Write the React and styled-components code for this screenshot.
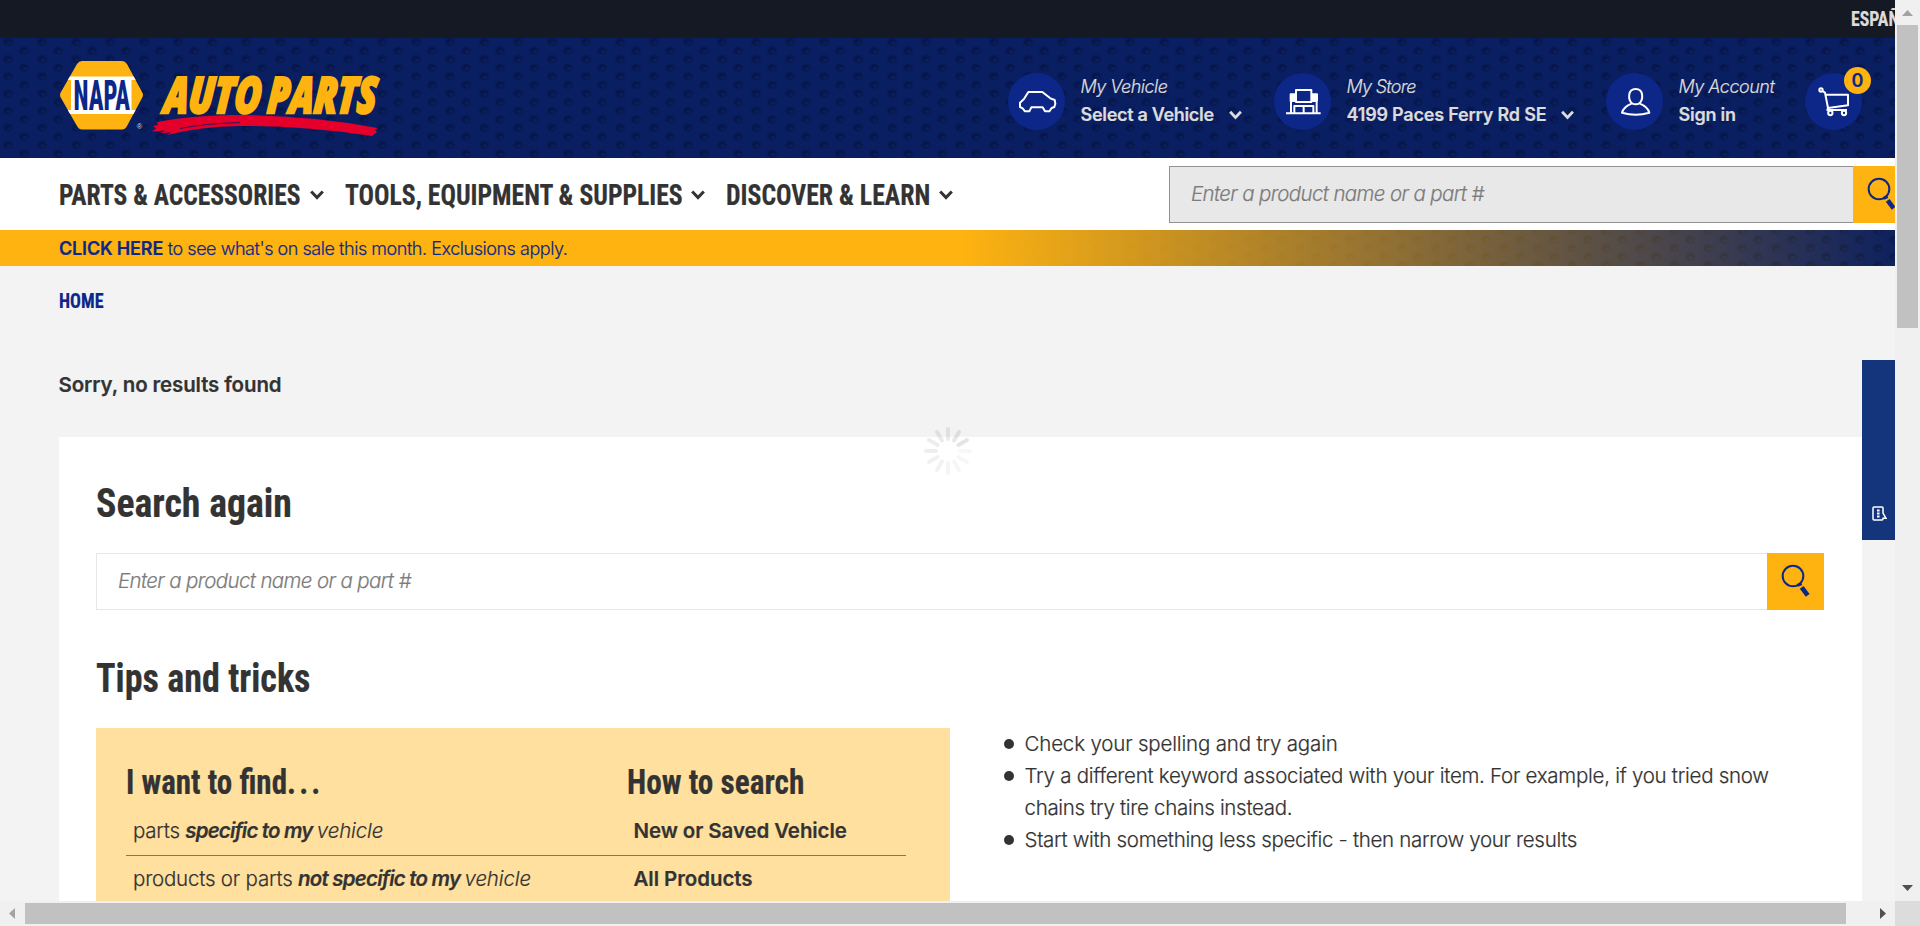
import React from 'react';
import styled, { createGlobalStyle, css } from 'styled-components';

const navy = '#0c2788';
const gold = '#ffb310';
const ink = '#333333';

const GlobalStyle = createGlobalStyle`
  * { box-sizing: border-box; }
  html, body { margin: 0; padding: 0; overflow: hidden; }
  body {
    font-family: Inter, "Liberation Sans", sans-serif;
    font-weight: 300;
    font-size: 20.5px;
    color: ${ink};
    -webkit-text-stroke: 0.2px currentColor;
  }
`;

/* Dimpled metal texture shared by the header and the promo strip */
const dimples = css`
  background-image:
    radial-gradient(ellipse 3px 2px at 9px 10px, rgba(12, 33, 98, 0.8) 50%, transparent 100%),
    radial-gradient(ellipse 6px 5px at 8px 9px, rgba(3, 14, 58, 0.55) 45%, transparent 100%),
    radial-gradient(ellipse 3px 2px at 25px 1.5px, rgba(12, 33, 98, 0.8) 50%, transparent 100%),
    radial-gradient(ellipse 6px 5px at 24px 0.5px, rgba(3, 14, 58, 0.55) 45%, transparent 100%),
    radial-gradient(ellipse 6px 5px at 24px 17.7px, rgba(3, 14, 58, 0.55) 45%, transparent 100%);
  background-size: 34px 17.2px;
  background-position: 0 12px;
`;

const Window = styled.div`
  display: grid;
  grid-template: 901px 25px / 1895px 25px;
  width: 1920px;
  height: 926px;
  overflow: hidden;
`;

const Page = styled.div`
  position: relative;
  overflow: hidden;
  background: #f3f3f3;
`;

const TopBar = styled.div`
  height: 38px;
  padding-left: 1850.5px;
  background: #151923;
  color: #dcdcdc;
  line-height: 39px;
`;

const Header = styled.header`
  display: flex;
  justify-content: space-between;
  height: 120px;
  padding: 0 33px 0 59px;
  background-color: #0a1f61;
  ${dimples}
`;

const Logo = styled.svg`
  width: 324px;
  height: 82px;
  margin-top: 20px;
`;

const Account = styled.div`
  display: grid;
  grid-template-columns: 266px 332px 199px 57px;
  padding-top: 35px;
  color: #dcdcdc;
  font-size: 18px;
  line-height: 28px;
`;

const AccountItem = styled.div`
  position: relative;
  display: flex;
  gap: 15.5px;
`;

const RoundIcon = styled.svg`
  flex: none;
  width: 57px;
  height: 57px;
  border-radius: 50%;
  background: ${navy};
  fill: none;
  stroke: #fff;
  stroke-width: 6;
  stroke-linejoin: round;
`;

const AccountLines = styled.div`
  white-space: nowrap;
`;

const Small = styled.div`
  font-style: italic;
  letter-spacing: ${(p) => p.$track}px;
`;

const Strong = styled.div`
  display: flex;
  align-items: center;
  gap: 15px;
  font-weight: 600;
  letter-spacing: ${(p) => p.$track}px;
`;

const Badge = styled.span`
  position: absolute;
  top: -6px;
  left: 39px;
  width: 27px;
  height: 27px;
  border-radius: 50%;
  background: ${gold};
  color: ${navy};
  font-weight: 600;
  font-size: 18px;
  line-height: 27px;
  text-align: center;
`;

const Chevron = styled.svg`
  flex: none;
  width: ${(p) => p.$w}px;
  height: 10px;
  fill: none;
  stroke: currentColor;
  stroke-width: 3;
`;

const NavBar = styled.nav`
  display: flex;
  justify-content: space-between;
  width: 1910px;
  height: 72px;
  padding: 8px 0 0 59px;
  background: #fff;
`;

const Menu = styled.div`
  display: flex;
  gap: 21px;
  height: 58px;
`;

const MenuItem = styled.div`
  display: flex;
  align-items: center;
  gap: 9px;
`;

/* Narrow display face: the box keeps the final width, the glyphs are squeezed into it */
const Narrow = styled.span`
  display: block;
  width: ${(p) => p.$w}px;
  font-family: "Roboto Condensed", Roboto, sans-serif;
  font-weight: 700;
  font-size: ${(p) => p.$size}px;
  white-space: nowrap;
  transform: scaleX(${(p) => p.$squeeze});
  transform-origin: 0 50%;
  color: ${(p) => p.$color || 'inherit'};
`;

const Dots = styled.span`
  letter-spacing: 3.5px;
`;

const SearchBox = styled.div`
  display: flex;
  width: ${(p) => p.$w}px;
  height: 57px;
`;

const Field = styled.div`
  flex: 1;
  padding-left: 21px;
  border: 1px solid ${(p) => (p.$dark ? '#929292' : '#e6e6e4')};
  border-right: 0;
  background: ${(p) => (p.$dark ? '#e8e8e8' : '#fff')};
  color: #7c7c7c;
  font-style: italic;
  line-height: 54px;
  letter-spacing: -0.63px;
`;

const SearchButton = styled.div`
  width: 57px;
  background: ${gold};
`;

const Glass = styled.svg`
  display: block;
  width: 57px;
  height: 57px;
  fill: none;
  stroke: ${navy};
`;

const Promo = styled.div`
  height: 36px;
  position: relative;
  padding-left: 59px;
  background-color: #0a1f60;
  ${dimples}
  background-position: 0 9px;
  color: ${navy};
  font-size: 18px;
  line-height: 37px;
  &::before {
    content: '';
    position: absolute;
    inset: 0;
    background: linear-gradient(90deg, ${gold} 960px, rgba(255, 179, 16, 0) 1910px);
  }
`;

const PromoText = styled.div`
  position: relative;
  letter-spacing: -0.46px;
`;

const PromoLink = styled.b`
  font-weight: 600;
  letter-spacing: -0.17px;
`;

const Crumbs = styled.div`
  margin: 24px 0 0 59px;
  line-height: 24px;
`;

const NoResults = styled.h2`
  margin: 56px 0 0 58.5px;
  font-weight: 600;
  font-size: 20.5px;
  line-height: 30px;
  letter-spacing: -0.13px;
`;

const Card = styled.section`
  width: 1803px;
  height: 600px;
  margin: 37px 0 0 59px;
  padding: 41px 38px 0 37px;
  background: #fff;
`;

const Heading = styled.h1`
  margin: 0 0 25px;
  line-height: 50px;
`;

const Tips = styled.div`
  display: flex;
  gap: 54px;
`;

const HeadingTips = styled(Heading)`
  margin-top: 43px;
`;

const Panel = styled.div`
  width: 854px;
  height: 300px;
  padding: 35px 44px 0 30px;
  background: #ffe09e;
`;

const PanelHead = styled.div`
  display: grid;
  grid-template-columns: 500.5px 1fr;
  margin-bottom: 5px;
  line-height: 40px;
`;

const PanelRow = styled.div`
  display: grid;
  grid-template-columns: 500.5px 1fr;
  padding-left: 7px;
  line-height: 46px;
  height: ${(p) => p.$h}px;
  border-bottom: 1px solid #777;
  white-space: nowrap;
`;

const Run = styled.span`
  letter-spacing: ${(p) => p.$track}px;
  font-weight: ${(p) => (p.$bold ? 600 : 300)};
  font-style: ${(p) => (p.$italic ? 'italic' : 'normal')};
`;

const List = styled.ul`
  margin: 0;
  padding: 0;
  list-style: none;
  line-height: 32px;
`;

const Item = styled.li`
  display: flex;
  gap: 10.5px;
  white-space: nowrap;
  &::before {
    content: '';
    flex: none;
    width: 10px;
    height: 10px;
    margin-top: 11px;
    border-radius: 50%;
    background: ${ink};
  }
`;

const Line = styled.div`
  letter-spacing: ${(p) => p.$track}px;
`;

const Spinner = styled.svg`
  position: absolute;
  left: 923px;
  top: 426px;
  width: 50px;
  height: 50px;
  stroke: #000;
  stroke-width: 4;
  stroke-linecap: round;
`;

const SideTab = styled.div`
  position: absolute;
  left: 1862px;
  top: 360px;
  width: 40px;
  height: 180px;
  padding: 146px 0 0 10px;
  background: #14347b;
`;

const TabIcon = styled.svg`
  display: block;
  width: 15px;
  height: 15px;
  fill: none;
  stroke: #fff;
  stroke-width: 1.5;
`;

const VBar = styled.div`
  display: flex;
  flex-direction: column;
  align-items: center;
  justify-content: space-between;
  background: #f0f0f0;
`;

const VTop = styled.div`
  display: flex;
  flex-direction: column;
  align-items: center;
`;

const VThumb = styled.div`
  width: 21px;
  height: 303px;
  background: #c1c1c1;
`;

const HBar = styled.div`
  display: flex;
  align-items: center;
  background: #f0f0f0;
`;

const HThumb = styled.div`
  width: 1821px;
  height: 21px;
  margin-right: 24px;
  background: #c1c1c1;
`;

const Arrow = styled.svg`
  display: block;
  width: 25px;
  height: 25px;
  fill: ${(p) => (p.$on ? '#505050' : '#a3a3a3')};
`;

const Corner = styled.div`
  background: #dcdcdc;
`;

const Down = ({ w = 14 }) => (
  <Chevron $w={w} viewBox="0 0 14 10"><path d="M1.2 1.5 L7 7.6 L12.8 1.5" /></Chevron>
);

const SearchIcon = () => (
  <SearchButton>
    <Glass viewBox="0 0 171 171">
      <circle cx="78" cy="69" r="31" strokeWidth="6" />
      <path d="M92 97 L104 92" strokeWidth="9" />
      <path d="M104 103 L122 127" strokeWidth="14" />
    </Glass>
  </SearchButton>
);

const Search = ({ width, dark }) => (
  <SearchBox $w={width}>
    <Field $dark={dark}>Enter a product name or a part #</Field>
    <SearchIcon />
  </SearchBox>
);

const NapaLogo = () => (
  <Logo viewBox="59 58 324 82">
    <defs>
      <clipPath id="hex">
        <path d="M82 61 H122 Q125 61 127 64 L142 92 Q144 95 142 98 L127 126 Q125 129.500 122 129.500 H82 Q79 129.500 77 126 L61 98 Q59 95 61 92 L77 64 Q79 61 82 61 Z" />
      </clipPath>
    </defs>
    <g clipPath="url(#hex)">
      <rect x="59" y="60" width="86" height="71" fill={gold} />
      <path d="M59 76.500 H145 V80 H131.500 V110 H145 V114 H59 V110 H71 V80 H59 Z" fill="#fff" />
    </g>
    <text x="73.500" y="110.300" fontFamily="Roboto Condensed" fontWeight="800" fontSize="43" fill={navy} textLength="56.500" lengthAdjust="spacingAndGlyphs">NAPA</text>
    <text x="136.800" y="128.500" fontFamily="Liberation Sans" fontSize="7.500" fill="#dcdcdc">®</text>
    <g fontFamily="Open Sans" fontWeight="800" fontStyle="italic" fontSize="50" fill={gold} stroke={gold} strokeWidth="2.600" transform="translate(0 113) skewX(-5)">
      <text x="163" y="0" textLength="97" lengthAdjust="spacingAndGlyphs">AUTO</text>
      <text x="266.500" y="0" textLength="109" lengthAdjust="spacingAndGlyphs">PARTS</text>
    </g>
    <path fill="#e4002b" d="M157 122 Q190 115.500 232 115 Q310 115 377.500 128 L375 130 L377 132 L372 136 Q300 125 240 126 Q200 126.500 167 135 L171 132.500 L160 133 L165 130.500 L152 131.500 L156 128.500 L153 126 L158 125 Z" />
    <path stroke="#091d5e" strokeWidth="0.800" fill="none" d="M180 128.500 Q205 123.500 240 122.500" />
  </Logo>
);

const bars = [0.03, 0.035, 0.035, 0.04, 0.05, 0.055, 0.065, 0.07, 0.08, 0.08, 0.09, 0.1];

export default function App() {
  return (
    <>
      <GlobalStyle />
      <Window>
        <Page>
          <TopBar><Narrow $w={66} $size={19.5} $squeeze={0.91}>ESPAÑOL</Narrow></TopBar>
          <Header>
            <NapaLogo />
            <Account>
              <AccountItem>
                <RoundIcon viewBox="0 0 171 171">
                  <path d="M61 57 H103 L127 76 L140 81 L142 92 L139 102 L131 105 L124 115 H111 L104 103 H70 L64 115 H51 L44 106 L36 102 V89 L48 78 Z" />
                </RoundIcon>
                <AccountLines>
                  <Small $track={-0.51}>My Vehicle</Small>
                  <Strong $track={-0.31}>Select a Vehicle <Down w={13} /></Strong>
                </AccountLines>
              </AccountItem>
              <AccountItem>
                <RoundIcon viewBox="0 0 171 171">
                  <path d="M66 51 H112 V87 H66 Z M36 121 H140 M51 87 V121 M128 87 V121 M61 121 V99 H118 V121 M89 99 V121" />
                  <path d="M50 64 H63 V84 H50 Z M115 64 H129 V84 H115 Z" fill="#fff" />
                </RoundIcon>
                <AccountLines>
                  <Small $track={-0.73}>My Store</Small>
                  <Strong $track={-0.2}>4199 Paces Ferry Rd SE <Down w={13} /></Strong>
                </AccountLines>
              </AccountItem>
              <AccountItem>
                <RoundIcon viewBox="0 0 171 171">
                  <path d="M78 91 C66 80 64 48 89 48 C114 48 112 80 100 91 Q126 102 130 119 Q89 131 48 119 Q52 102 78 91 Q89 97 100 91" />
                </RoundIcon>
                <AccountLines>
                  <Small $track={-0.5}>My Account</Small>
                  <Strong $track={-0.26}>Sign in</Strong>
                </AccountLines>
              </AccountItem>
              <AccountItem>
                <RoundIcon viewBox="0 0 171 171">
                  <circle cx="48" cy="51" r="5" />
                  <path d="M52 54 L60 59 L69 105 L129 97 V65 H63 M69 105 L67 111 H126" />
                  <circle cx="76" cy="120" r="6.500" />
                  <circle cx="117" cy="120" r="6.500" />
                </RoundIcon>
                <Badge>0</Badge>
              </AccountItem>
            </Account>
          </Header>
          <NavBar>
            <Menu>
              <MenuItem><Narrow $w={241.5} $size={29.5} $squeeze={0.864}>PARTS &amp; ACCESSORIES</Narrow><Down /></MenuItem>
              <MenuItem><Narrow $w={337} $size={29.5} $squeeze={0.87}>TOOLS, EQUIPMENT &amp; SUPPLIES</Narrow><Down /></MenuItem>
              <MenuItem><Narrow $w={204} $size={29.5} $squeeze={0.873}>DISCOVER &amp; LEARN</Narrow><Down /></MenuItem>
            </Menu>
            <Search width={741} dark />
          </NavBar>
          <Promo>
            <PromoText><PromoLink>CLICK HERE</PromoLink> to see what's on sale this month. Exclusions apply.</PromoText>
          </Promo>
          <Crumbs><Narrow $w={44} $size={19.5} $squeeze={0.925} $color={navy}>HOME</Narrow></Crumbs>
          <NoResults>Sorry, no results found</NoResults>
          <Card>
            <Heading><Narrow $w={194} $size={41} $squeeze={0.922}>Search again</Narrow></Heading>
            <Search width={1728} />
            <HeadingTips><Narrow $w={213} $size={41} $squeeze={0.88}>Tips and tricks</Narrow></HeadingTips>
            <Tips>
              <Panel>
                <PanelHead>
                  <Narrow $w={189} $size={35} $squeeze={0.887}>I want to find<Dots>...</Dots></Narrow>
                  <Narrow $w={177} $size={35} $squeeze={0.893}>How to search</Narrow>
                </PanelHead>
                <PanelRow $h={48}>
                  <div>
                    <Run $track={-0.25}>parts </Run>
                    <Run $track={-0.84} $bold $italic>specific to my </Run>
                    <Run $italic $track={-0.15}>vehicle</Run>
                  </div>
                  <Run $bold $track={-0.1}>New or Saved Vehicle</Run>
                </PanelRow>
                <PanelRow $h={47}>
                  <div>
                    <Run $track={-0.2}>products or parts </Run>
                    <Run $track={-0.8} $bold $italic>not specific to my </Run>
                    <Run $italic $track={-0.15}>vehicle</Run>
                  </div>
                  <Run $bold $track={-0.07}>All Products</Run>
                </PanelRow>
              </Panel>
              <List>
                <Item><Line $track={-0.17}>Check your spelling and try again</Line></Item>
                <Item>
                  <div>
                    <Line $track={-0.27}>Try a different keyword associated with your item. For example, if you tried snow</Line>
                    <Line $track={-0.31}>chains try tire chains instead.</Line>
                  </div>
                </Item>
                <Item><Line $track={-0.31}>Start with something less specific - then narrow your results</Line></Item>
              </List>
            </Tips>
          </Card>
          <Spinner viewBox="-25 -25 50 50">
            {bars.map((o, i) => (
              <path key={i} d="M12 0 H22" strokeOpacity={o} transform={`rotate(${i * 30})`} />
            ))}
          </Spinner>
          <SideTab>
            <TabIcon viewBox="0 0 15 15">
              <path d="M2 1 H10 Q11 1 11 2 V7 L14 12.300 H11 V13 Q11 14 10 14 H2 Q1 14 1 13 V2 Q1 1 2 1 Z" />
              <path d="M6.300 3.500 V11.500" strokeWidth="2.600" strokeDasharray="2 1" />
            </TabIcon>
          </SideTab>
        </Page>
        <VBar>
          <VTop>
            <Arrow viewBox="0 0 25 25"><path d="M7 16 L12.500 10 L18 16 Z" /></Arrow>
            <VThumb />
          </VTop>
          <Arrow $on viewBox="0 0 25 25"><path d="M7 9 L12.500 15 L18 9 Z" /></Arrow>
        </VBar>
        <HBar>
          <Arrow viewBox="0 0 25 25"><path d="M15 7 L9 12.500 L15 18 Z" /></Arrow>
          <HThumb />
          <Arrow $on viewBox="0 0 25 25"><path d="M10 7 L16 12.500 L10 18 Z" /></Arrow>
        </HBar>
        <Corner />
      </Window>
    </>
  );
}
